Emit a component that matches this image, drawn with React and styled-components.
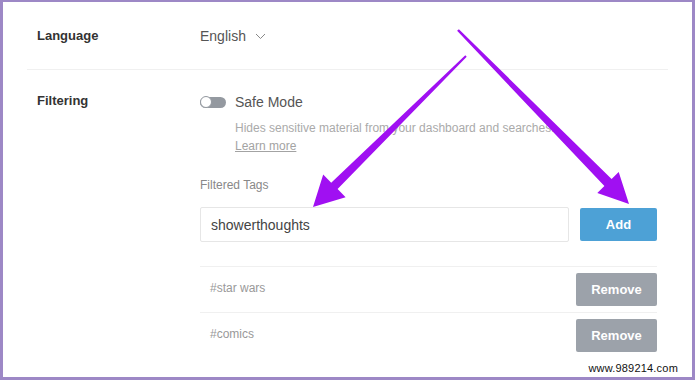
import React from 'react'
import styled, { createGlobalStyle } from 'styled-components'

const GlobalStyle = createGlobalStyle`
  html, body {
    margin: 0;
    padding: 0;
    background: #fff;
  }
  body {
    font-family: "Liberation Sans", Arial, sans-serif;
  }
`

const Frame = styled.div`
  position: relative;
  box-sizing: border-box;
  width: 695px;
  height: 380px;
  border-style: solid;
  border-color: #9d88c6;
  border-width: 2px 3px 3px 3px;
  background: #fff;
  overflow: hidden;
`

const Settings = styled.div`
  margin: 0 24px 0 24px;
`

const Row = styled.div`
  display: grid;
  grid-template-columns: 173px 1fr;
  padding: ${(p) => p.$pad};
  border-bottom: ${(p) => (p.$divider ? '1px solid #f0f0f0' : 'none')};
`

const Label = styled.div`
  padding-left: 10px;
  font-size: 13px;
  line-height: 18px;
  font-weight: bold;
  color: #333;
`

const Content = styled.div`
  padding-right: 11px;
`

const Select = styled.div`
  display: flex;
  align-items: center;
  gap: 9px;
  font-size: 14px;
  line-height: 18px;
  color: #555;
`

const ToggleLine = styled.div`
  display: flex;
  align-items: center;
  gap: 9px;
  margin-top: 1px;
`

const Toggle = styled.div`
  position: relative;
  width: 26px;
  height: 11px;
  border-radius: 6px;
  background: #9499a0;

  &::after {
    content: '';
    position: absolute;
    left: 0;
    top: -0.5px;
    box-sizing: border-box;
    width: 12px;
    height: 12px;
    border-radius: 50%;
    border: 1.5px solid #9499a0;
    background: #fff;
  }
`

const ToggleText = styled.div`
  font-size: 14px;
  line-height: 18px;
  color: #555;
`

const Help = styled.div`
  margin: 8px 0 0 35px;
  font-size: 12px;
  line-height: 18px;
  color: #aaa;
`

const LearnLink = styled.a`
  display: block;
  color: #a3a3a3;
  text-decoration: underline;
`

const SmallLabel = styled.div`
  margin-top: 21px;
  font-size: 12px;
  line-height: 18px;
  color: #888;
`

const AddRow = styled.div`
  display: flex;
  align-items: center;
  gap: 11px;
  margin-top: 13px;
`

const Input = styled.div`
  box-sizing: border-box;
  flex: 1;
  height: 35px;
  display: flex;
  align-items: center;
  padding-left: 10px;
  border: 1px solid #e6e6e6;
  border-radius: 2px;
  font-size: 14px;
  color: #444;
`

const Button = styled.button`
  box-sizing: border-box;
  width: ${(p) => p.$w}px;
  height: 33px;
  border: none;
  border-radius: 2px;
  background: ${(p) => p.$bg};
  color: #fff;
  font-family: "Liberation Sans", Arial, sans-serif;
  font-size: 13px;
  font-weight: bold;
  padding: 0;
`

const TagList = styled.div`
  margin-top: 24px;
`

const TagRow = styled.div`
  display: flex;
  align-items: center;
  justify-content: space-between;
  height: 45px;
  border-top: 1px solid #f0f0f0;
`

const TagName = styled.div`
  padding: 0 0 4px 10px;
  font-size: 12px;
  color: #999;
`

const Watermark = styled.div`
  position: absolute;
  right: 12px;
  bottom: 3px;
  font-size: 11px;
  letter-spacing: 0.2px;
  color: #111;
  background: #fff;
  padding: 0 2px;
`

const Arrows = styled.svg`
  position: absolute;
  left: -3px;
  top: -2px;
  pointer-events: none;
`

const Chevron = () => (
  <svg width="11" height="7" viewBox="0 0 11 7">
    <path d="M1 1l4.5 4.5L10 1" fill="none" stroke="#888" strokeWidth="1" />
  </svg>
)

const tags = ['#star wars', '#comics']

export default function App() {
  return (
    <>
      <GlobalStyle />
      <Frame>
        <Settings>
          <Row $pad="25px 0 24px" $divider>
            <Label>Language</Label>
            <Select>
              English <Chevron />
            </Select>
          </Row>
          <Row $pad="22px 0 0">
            <Label>Filtering</Label>
            <Content>
              <ToggleLine>
                <Toggle />
                <ToggleText>Safe Mode</ToggleText>
              </ToggleLine>
              <Help>
                Hides sensitive material from your dashboard and searches.
                <LearnLink>Learn more</LearnLink>
              </Help>
              <SmallLabel>Filtered Tags</SmallLabel>
              <AddRow>
                <Input>showerthoughts</Input>
                <Button $w={77} $bg="#4da1d6">Add</Button>
              </AddRow>
              <TagList>
                {tags.map((t) => (
                  <TagRow key={t}>
                    <TagName>{t}</TagName>
                    <Button $w={81} $bg="#9ca2aa">Remove</Button>
                  </TagRow>
                ))}
              </TagList>
            </Content>
          </Row>
        </Settings>
        <Watermark>www.989214.com</Watermark>
        <Arrows width="695" height="380" viewBox="0 0 695 380">
          <polygon
            fill="#a010f2"
            points="465.3,55.3 331.2,182.7 323.2,174.5 313,207 345.6,197.3 337.6,189.1 466.7,56.7"
          />
          <polygon
            fill="#a010f2"
            points="457.1,30.8 604.4,186.1 597.3,193.1 629,204 618.7,172.1 611.6,179.1 458.9,29.2"
          />
        </Arrows>
      </Frame>
    </>
  )
}
